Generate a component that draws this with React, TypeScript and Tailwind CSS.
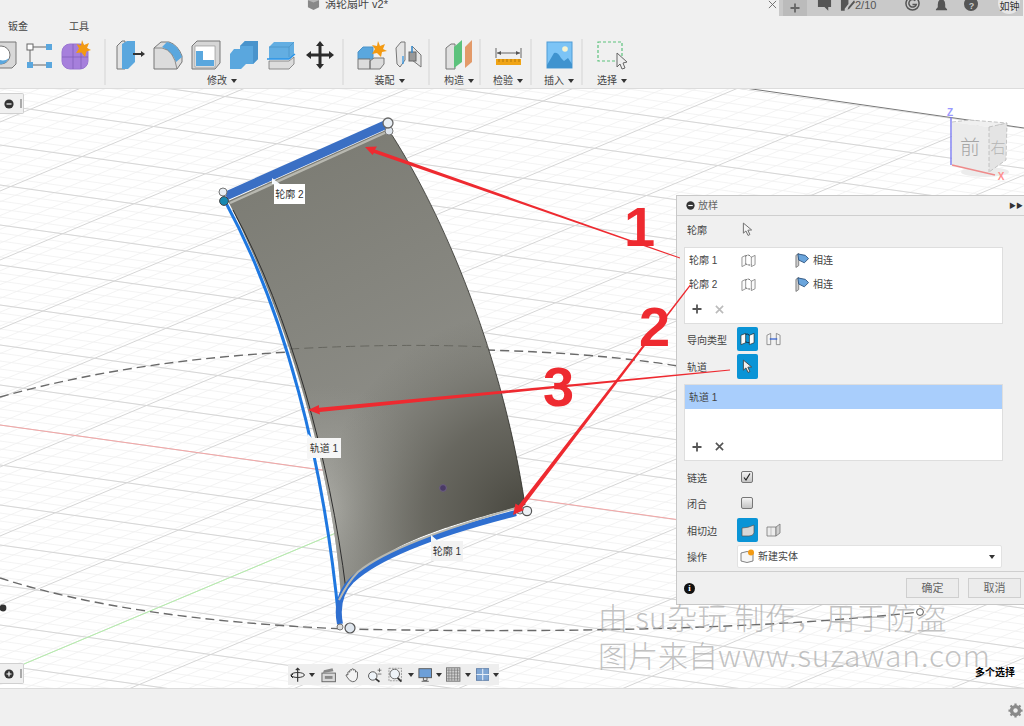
import type { ReactNode } from "react";

// ── Small helpers ──────────────────────────────────────────────────────────────

function Ico({ children, w = 30 }: { children: ReactNode; w?: number }) {
  return (
    <svg viewBox={`0 0 ${w} 30`} className="h-[30px] shrink-0" width={w}>
      {children}
    </svg>
  );
}

function Caret() {
  return <span className="ml-[4px] inline-block h-0 w-0 border-x-[3px] border-t-[4px] border-x-transparent border-t-[#333]" />;
}

function Sep() {
  return <div className="h-[46px] w-[2px] shrink-0 bg-[#e2e2e2]" />;
}

function Cursor({ fill = "#f4f4f4", stroke = "#666" }: { fill?: string; stroke?: string }) {
  return (
    <svg viewBox="0 0 12 16" className="h-[15px] w-[11px]">
      <path d="M1.5 1 L1.5 12 L4.3 9.6 L6.6 14.5 L8.6 13.5 L6.4 8.8 L10.5 8.5 Z" fill={fill} stroke={stroke} strokeWidth="1" />
    </svg>
  );
}

function ProfileIcon() {
  return (
    <svg viewBox="0 0 16 15" className="h-[15px] w-[15px]">
      <path d="M1 4 L5 2 V12 L1 14Z M11 4 L15 2 V12 L11 14Z" fill="#fafafa" stroke="#777" strokeWidth=".8" />
      <path d="M5 3 Q8 0 11 4 M5 11 Q8 13 11 12" fill="none" stroke="#444" strokeWidth="1" strokeDasharray="2 1" />
    </svg>
  );
}

function TangentIcon() {
  return (
    <svg viewBox="0 0 15 16" className="h-[16px] w-[14px]">
      <path d="M1 3 L4 1 V14 L1 16Z" fill="#ccc" stroke="#666" strokeWidth=".8" />
      <path d="M3 1.5 L11 3 L14.5 6.5 L10 11 L4 8Z" fill="#6aa5dc" stroke="#2f5580" strokeWidth="1" />
    </svg>
  );
}

function Plus({ x = "#555" }: { x?: string }) {
  return (
    <svg viewBox="0 0 10 10" className="h-[10px] w-[10px]">
      <path d="M5 0.5 V9.5 M0.5 5 H9.5" stroke={x} strokeWidth="1.8" />
    </svg>
  );
}

function Cross({ x = "#555" }: { x?: string }) {
  return (
    <svg viewBox="0 0 10 10" className="h-[9px] w-[9px]">
      <path d="M1 1 L9 9 M9 1 L1 9" stroke={x} strokeWidth="1.8" />
    </svg>
  );
}

function BlueBtn({ children }: { children: ReactNode }) {
  return <div className="flex h-full w-[21px] items-center justify-center rounded-[2px] bg-[#0a94d6]">{children}</div>;
}

function Row({ label, className, children }: { label: string; className: string; children?: ReactNode }) {
  return (
    <div className={`flex items-center ${className}`}>
      <span className="w-[53px] shrink-0 pl-[3px] pt-[3px]">{label}</span>
      {children}
    </div>
  );
}

function Checkbox({ checked }: { checked?: boolean }) {
  return (
    <div className="ml-[4px] flex h-[12px] w-[12px] items-center justify-center rounded-[2px] border border-[#777] bg-gradient-to-b from-[#f4f4f4] to-[#c4c4c4]">
      {checked && (
        <svg viewBox="0 0 10 10" className="h-[10px] w-[10px]">
          <path d="M2 5.5 L4 8 L8 1.5" fill="none" stroke="#222" strokeWidth="1.2" />
        </svg>
      )}
    </div>
  );
}

function ProfileRow({ label }: { label: string }) {
  return (
    <div className="flex h-[24px] items-center pl-[4px]">
      <span className="w-[52px] shrink-0 pt-[1px]">{label}</span>
      <div className="w-[54px] shrink-0"><ProfileIcon /></div>
      <TangentIcon />
      <span className="ml-[4px] pt-[1px]">相连</span>
    </div>
  );
}

function SideTab({ glyph }: { glyph: "minus" | "plus" }) {
  return (
    <div className="flex h-[21px] w-[24px] items-center rounded-r-[2px] border border-l-0 border-[#d0d0d0] bg-[#f0f0f0] pl-[4px]">
      <svg viewBox="0 0 10 10" className="h-[10px] w-[10px]">
        <circle cx="5" cy="5" r="4.6" fill="#333" />
        <path d={glyph === "minus" ? "M2.5 5 H7.5" : "M2.5 5 H7.5 M5 2.5 V7.5"} stroke="#fff" strokeWidth="1.2" />
      </svg>
      <span className="ml-[6px] h-[9px] w-[2px] bg-[#aaa]" />
    </div>
  );
}

// ── Ribbon ─────────────────────────────────────────────────────────────────────

function RibbonGroup({ label, className, labelClass = "", children }: { label?: string; className: string; labelClass?: string; children: ReactNode }) {
  return (
    <div className={`flex shrink-0 flex-col items-center ${className}`}>
      <div className="flex h-[32px] items-center gap-[8px]">{children}</div>
      {label && (
        <div className={`mt-[4px] flex h-[12px] items-center text-[10px] leading-none text-[#444] ${labelClass}`}>
          {label}
          <Caret />
        </div>
      )}
    </div>
  );
}

function Ribbon() {
  return (
    <div className="flex h-[52px] items-start pt-[2px]">
      {/* clipped first group */}
      <div className="-ml-[12px] flex h-[32px] w-[116px] shrink-0 items-center gap-[8px]">
        <Ico>
          <path d="M1 6 L5 2 H28 V24 L24 28 H1Z" fill="#d8d8d8" stroke="#777" />
          <circle cx="13" cy="15" r="9" fill="#fff" stroke="#777" />
          <path d="M6 16 Q14 24 21 18 Q16 27 9 23Z" fill="#5aa7de" />
        </Ico>
        <Ico w={27}>
          <rect x="1" y="4" width="6" height="6" fill="#fff" stroke="#666" />
          <rect x="20" y="4" width="6" height="6" fill="#5aa7de" />
          <rect x="1" y="22" width="6" height="6" fill="#5aa7de" />
          <rect x="20" y="22" width="6" height="6" fill="#5aa7de" />
          <path d="M7 7 H20 M4 10 V22 M7 25 H20" stroke="#666" />
        </Ico>
        <Ico>
          <rect x="1" y="4" width="26" height="25" rx="8" fill="#a67fdc" stroke="#9a76d2" />
          <path d="M1 17 H27 M12 4 V29 M20 4 V29" stroke="#7d5bb5" strokeWidth=".7" />
          <path d="M21 0 L23 5 L28 3 L26 8 L30 10 L25.5 11.5 L24 17 L20.5 12.5 L15 13 L18 8.5 L15.5 4 L20 5.5Z" fill="#f39a12" />
        </Ico>
      </div>
      <Sep />
      <RibbonGroup label="修改" labelClass="pr-[6px]" className="ml-[2px] w-[234px]">
        <Ico>
          <path d="M2 6 L7 1 H10 V29 H2Z" fill="#e2e2e2" stroke="#777" />
          <path d="M7 4 L12 1 H20 V22 L13 29 H7Z" fill="#5aa7de" />
          <path d="M18 14 H27" stroke="#333" strokeWidth="2" />
          <path d="M30 14 L26 11 V17Z" fill="#333" />
        </Ico>
        <Ico>
          <path d="M1 8 L8 2 H16 Q25 5 29 16 V22 L24 29 H1Z" fill="#dcdcdc" stroke="#777" />
          <path d="M14 2 Q25 4 29 17 L23 22 Q20 12 9 7Z" fill="#5aa7de" />
          <path d="M1 8 H9 Q21 10 24 29" fill="none" stroke="#777" strokeWidth=".8" />
        </Ico>
        <Ico>
          <path d="M1 6 L6 1 H29 V23 L24 29 H1Z" fill="#d6d6d6" stroke="#777" />
          <rect x="4" y="6" width="20" height="21" fill="#fff" stroke="#888" strokeWidth=".6" />
          <path d="M5 11 H12 V20 H23 V26 H5Z" fill="#5aa7de" />
        </Ico>
        <Ico>
          <path d="M1 14 L5 9 H11 V6 L16 1 H29 V19 L24 24 H17 V24 L12 29 H1Z" fill="#5aa7de" />
          <path d="M16 1 H29 V19 L24 24 V6 H11Z" fill="#4a94cc" />
        </Ico>
        <Ico>
          <path d="M2 7 L7 2 H27 V15 L23 19 H2Z" fill="#63aee2" />
          <path d="M22 7 H2 M22 7 L27 2 M22 7 V17" stroke="#4d94c8" strokeWidth=".8" fill="none" />
          <path d="M0 19 H22 L28 14" stroke="#2a94e8" strokeWidth="1.3" fill="none" />
          <path d="M2 21 H22 L27 17 V24 L22 29 H2Z" fill="#dcdcdc" stroke="#777" strokeWidth=".8" />
        </Ico>
        <Ico>
          <path d="M15 1 L19 6 H16.5 V13.5 H24 V11 L29 15 L24 19 V16.5 H16.5 V24 H19 L15 29 L11 24 H13.5 V16.5 H6 V19 L1 15 L6 11 V13.5 H13.5 V6 H11Z" fill="#2b2b2b" />
        </Ico>
      </RibbonGroup>
      <Sep />
      <RibbonGroup label="装配" className="ml-[7px] w-[77px]">
        <Ico>
          <path d="M1 12 L6 7 H16 V19 H1Z" fill="#5aa7de" stroke="#4d94c8" />
          <path d="M1 19 H13 V29 H1Z M13 21 L17 18 H27 V24 L23 29 H13Z" fill="#dcdcdc" stroke="#777" />
          <path d="M21 1 L23 6 L28 4 L26 9 L30 11 L25 12 L24 17 L20 13 L15 14 L18 9 L15 5 L20 6Z" fill="#f39a12" />
        </Ico>
        <Ico w={27}>
          <path d="M1 8 L6 2 H10 V20 L5 27 L2 24Z M17 6 L26 15 V27 L17 20Z" fill="#e4e4e4" stroke="#777" />
          <rect x="14" y="12" width="7" height="9" fill="#999" stroke="#666" />
          <path d="M17 6 V13 M8 16 V24" stroke="#2a94e8" strokeWidth="1.2" />
        </Ico>
      </RibbonGroup>
      <Sep />
      <RibbonGroup label="构造" className="ml-[9px] w-[40px]">
        <Ico w={28}>
          <path d="M1 8 L6 4 H10 V29 H1Z" fill="#e0e0e0" stroke="#777" />
          <path d="M9 7 L17 0 V22 L9 28Z" fill="#5cc27c" />
          <path d="M20 7 L27 0 V22 L20 28Z" fill="#e39a69" />
        </Ico>
      </RibbonGroup>
      <Sep />
      <RibbonGroup label="检验" className="ml-[5px] w-[44px]">
        <Ico w={27}>
          <path d="M1 8 V18 M26 8 V18 M2 13 H25" stroke="#666" strokeWidth="1" />
          <path d="M2 13 L6 11 V15Z M25 13 L21 11 V15Z" fill="#555" />
          <rect x="1" y="19" width="25" height="6" fill="#f0a416" />
          <path d="M4 19 V22 M8 19 V22 M12 19 V22 M16 19 V22 M20 19 V22 M24 19 V22" stroke="#8a5a00" strokeWidth=".6" />
        </Ico>
      </RibbonGroup>
      <Sep />
      <RibbonGroup label="插入" className="ml-[5px] w-[44px]">
        <Ico w={27}>
          <rect x="1" y="2" width="25" height="26" fill="#7cc4f6" stroke="#4f9cd6" />
          <circle cx="19" cy="9" r="2.8" fill="#f7f3d0" />
          <path d="M1 25 L8 13 Q12 12 15 18 L18 21 L22 18 L26 24 V28 H1Z" fill="#3f93cf" />
        </Ico>
      </RibbonGroup>
      <Sep />
      <RibbonGroup label="选择" className="ml-[6px] w-[46px]">
        <Ico>
          <rect x="1" y="2" width="24" height="19" fill="none" stroke="#5cc27c" strokeWidth="1.2" strokeDasharray="3 2" />
          <path d="M20 13 V27 L23 24 L25 29 L28 28 L26 23 L30 22Z" fill="#eee" stroke="#666" />
        </Ico>
      </RibbonGroup>
    </div>
  );
}

// ── Top bar ────────────────────────────────────────────────────────────────────

function TopRow() {
  return (
    <div className="flex h-[16px] items-start overflow-hidden">
      <svg viewBox="0 0 14 14" className="ml-[307px] h-[13px] w-[13px] shrink-0 -translate-y-[3px]">
        <path d="M7 1 L13 3.5 V11 L7 14 L1 11 V3.5Z" fill="#888" />
        <path d="M1 3.5 L7 6 L13 3.5 L7 1Z" fill="#b5b5b5" />
      </svg>
      <span className="ml-[5px] -translate-y-[3px] whitespace-nowrap text-[11px] leading-[14px] text-[#444]">涡轮扇叶 v2*</span>
      <svg viewBox="0 0 10 10" className="ml-[380px] h-[9px] w-[9px] shrink-0">
        <path d="M1 1 L9 9 M9 1 L1 9" stroke="#666" strokeWidth="1" />
      </svg>
      <div className="ml-[2px] flex h-[16px] w-[244px] shrink-0 items-center bg-[#c9c9c9] text-[#555]">
        <div className="ml-[4px] flex h-full w-[24px] items-center justify-center bg-[#bbbbbb]">
          <Plus x="#666" />
        </div>
        <svg viewBox="0 0 16 12" className="ml-[10px] h-[12px] w-[15px] -translate-y-[3px]">
          <path d="M1 0 H15 V8 H12 L12 12 L8 8 H1Z M3 3 H12 V4 H3Z" fill="#555" />
        </svg>
        <svg viewBox="0 0 16 12" className="ml-[8px] h-[12px] w-[15px] -translate-y-[3px]">
          <path d="M1 0 H9 V5 L5 10 V12 H1Z M9 8 L15 1 L16 3 L10 10 L8 11Z" fill="#555" />
        </svg>
        <span className="-translate-y-[3px] text-[11px] leading-none">2/10</span>
        <svg viewBox="0 0 16 16" className="ml-[29px] h-[15px] w-[15px] -translate-y-[5px]">
          <circle cx="8" cy="8" r="7" fill="none" stroke="#555" strokeWidth="1.6" />
          <path d="M11 5 A4 4 0 1 0 12 9 H8" fill="none" stroke="#555" strokeWidth="1.6" />
        </svg>
        <svg viewBox="0 0 14 14" className="ml-[15px] h-[13px] w-[13px] -translate-y-[3px]">
          <path d="M7 0 Q11 1 11 6 V9 L13 11 V12 H1 V11 L3 9 V6 Q3 1 7 0Z" fill="#555" />
        </svg>
        <div className="ml-[16px] flex h-[14px] w-[14px] -translate-y-[4px] items-end justify-center rounded-full bg-[#555] text-[9px] font-bold leading-none text-[#c9c9c9]">?</div>
        <div className="ml-[20px] flex h-[22px] w-[22px] shrink-0 translate-y-[-5px] items-end justify-center whitespace-nowrap rounded-full bg-[#e6e6e6] text-[10px] leading-[15px] text-[#333]">如钟</div>
      </div>
    </div>
  );
}

// ── Viewport drawing ───────────────────────────────────────────────────────────

const minorRed = Array.from({ length: 130 }, (_, i) => -15 + i * 8);
const minorGreen = Array.from({ length: 110 }, (_, i) => 50 + i * 13.8);
const majorRed = Array.from({ length: 26 }, (_, i) => -15 + i * 40);
const majorGreen = Array.from({ length: 22 }, (_, i) => 674 - 9 * 69 + i * 69);

const BLADE = "M228 201 L388 129 C435 200 500 340 525 505 C450 525 370 545 341 598 C334 470 284 310 228 201Z";

function Scene() {
  return (
    <svg viewBox="0 89 1024 599" className="absolute inset-0 h-full w-full">
      <defs>
        <clipPath id="ground">
          <path d="M0 -15 L1024 128.4 V700 H0Z" />
        </clipPath>
        <linearGradient id="bladeBase" gradientUnits="userSpaceOnUse" x1="300" y1="150" x2="420" y2="400">
          <stop offset="0" stopColor="#7c7c74" />
          <stop offset="1" stopColor="#8c8c86" />
        </linearGradient>
        <radialGradient id="bladeLight" gradientUnits="userSpaceOnUse" cx="325" cy="510" r="125">
          <stop offset="0" stopColor="#b0b0aa" stopOpacity=".95" />
          <stop offset="1" stopColor="#9a9a94" stopOpacity="0" />
        </radialGradient>
        <radialGradient id="bladeDark" gradientUnits="userSpaceOnUse" cx="530" cy="520" r="210">
          <stop offset="0" stopColor="#45443c" />
          <stop offset="0.5" stopColor="#5c5b53" stopOpacity=".75" />
          <stop offset="1" stopColor="#6a6a62" stopOpacity="0" />
        </radialGradient>
      </defs>
      <g clipPath="url(#ground)">
        {minorRed.map((y) => (
          <line key={y} x1="0" y1={y} x2="1024" y2={y + 143.4} stroke="#f0f0f0" strokeWidth=".8" />
        ))}
        {minorGreen.map((y) => (
          <line key={y} x1="0" y1={y} x2="1024" y2={y - 430} stroke="#f0f0f0" strokeWidth=".8" />
        ))}
        {majorRed.map((y) => (
          <line key={y} x1="0" y1={y} x2="1024" y2={y + 143.4} stroke="#d6d6d6" strokeWidth="1" />
        ))}
        {majorGreen.map((y) => (
          <line key={y} x1="0" y1={y} x2="1024" y2={y - 430} stroke="#d6d6d6" strokeWidth="1" />
        ))}
      </g>
      <line x1="745" y1="88" x2="1024" y2="128" stroke="#777" strokeWidth="1" />
      <line x1="0" y1="425" x2="1024" y2="568" stroke="#f4a6a6" strokeWidth="1" />
      <line x1="24" y1="664" x2="443" y2="488" stroke="#b4efaa" strokeWidth="1" />

      {/* dashed sweep circle */}
      <path d="M0 397 Q150 355 340 350 Q560 345 690 368" fill="none" stroke="#6a6a6a" strokeWidth="1.4" strokeDasharray="9 5" />
      <path d="M0 578 Q130 620 345 629 Q700 636 920 612" fill="none" stroke="#6a6a6a" strokeWidth="1.4" strokeDasharray="9 5" />
      <circle cx="3" cy="608" r="3.4" fill="#333" />
      <circle cx="920" cy="612" r="3.4" fill="#fff" stroke="#555" />

      {/* blade */}
      <path d={BLADE} fill="url(#bladeBase)" />
      <path d={BLADE} fill="url(#bladeLight)" />
      <path d={BLADE} fill="url(#bladeDark)" />
      <path d="M388 129 C435 200 500 340 525 505" fill="none" stroke="#2e2e2a" strokeWidth=".8" />
      <path d="M290 349 Q400 343 488 347" fill="none" stroke="#66665f" strokeWidth="1" strokeDasharray="9 5" />
      <path d="M233 210 C290 315 330 460 346 590" fill="none" stroke="#2e2e2e" strokeWidth="1" />
      <path d="M226 203 C284 310 324 460 339 622" fill="none" stroke="#1f78e0" strokeWidth="3" />
      <path d="M340 624 C336 604 342 590 352 580 C378 556 430 535 516 513" fill="none" stroke="#2f6fd0" strokeWidth="6" />
      <path d="M339 600 C344 590 350 580 358 572 C385 550 440 530 516 508" fill="none" stroke="#b8b8b0" strokeWidth="2" />
      <path d="M226 196 L387 124" fill="none" stroke="#3a6fc4" strokeWidth="9" />
      <path d="M230 203 L389 131" fill="none" stroke="#b8b8b0" strokeWidth="2.4" />
      <path d="M272 178 L280 184 L272 184Z M308 434 L314 440 L308 442Z M431 535 L438 541 L431 542Z" fill="#f4f8fc" />
      <circle cx="443" cy="488" r="3.4" fill="#4a3a66" stroke="#6d6080" />
      <circle cx="223" cy="192" r="4" fill="#e8eef4" stroke="#777" />
      <circle cx="224" cy="201" r="4.4" fill="#1688b0" stroke="#444" />
      <circle cx="389" cy="131" r="4" fill="#dfe6ee" stroke="#777" />
      <circle cx="388" cy="123" r="5" fill="#e8eef4" stroke="#666" strokeWidth="1.3" />
      <circle cx="520" cy="510" r="4" fill="#c5d6e8" stroke="#777" />
      <circle cx="527" cy="511" r="4.6" fill="#eef2f6" stroke="#555" strokeWidth="1.2" />
      <circle cx="340" cy="627" r="3" fill="#ddd" stroke="#777" />
      <circle cx="350" cy="628" r="5" fill="#dfe6ee" stroke="#555" strokeWidth="1.2" />

      {/* view cube */}
      <ellipse cx="985" cy="172" rx="24" ry="5" fill="#ececec" />
      <path d="M952 122 L970 120 L1007 123 L989 127Z" fill="#f0f0f0" />
      <path d="M952 122 L989 127 L989 172 L952 165Z" fill="#ebebeb" />
      <path d="M989 127 L1007 123 L1006 160 L989 172Z" fill="#e4e4e4" />
      <path d="M952 122 L970 120 L1007 123 L1006 160 L989 172 M989 127 L1007 123 M989 127 V172" fill="none" stroke="#b8b8b8" strokeWidth=".8" strokeDasharray="4 2" />
      <text x="970" y="155" textAnchor="middle" fontSize="20" fill="#a6a6a6" fontWeight="300">前</text>
      <text x="998" y="153" textAnchor="middle" fontSize="15" fill="#b4b4b4" fontWeight="300">右</text>
      <line x1="951" y1="117" x2="951" y2="165" stroke="#7a7af0" strokeWidth="1.4" />
      <line x1="952" y1="165" x2="995" y2="175" stroke="#ee8a8a" strokeWidth="1.4" />
      <text x="950" y="116" textAnchor="middle" fontSize="10" fontWeight="700" fill="#9a9aff">Z</text>
      <text x="1001" y="180" textAnchor="middle" fontSize="10" fontWeight="700" fill="#ff8f8f">X</text>
    </svg>
  );
}

function Annotations() {
  return (
    <svg viewBox="0 89 1024 599" className="pointer-events-none absolute inset-0 h-full w-full">
      <g fill="#ee2a30">
        <path d="M365 147 L377 146.5 L375 149.6 L680 257.5 L680 258.6 L374 153 L372.5 155Z" />
        <path d="M513 515 L515.5 503.5 L518.5 505.5 L690 284.6 L690.8 285.4 L522 508 L524 510Z" />
        <path d="M308 410 L319 405 L319 407.8 L730 369.4 L730 370.6 L319.5 412 L320 414.5Z" />
      </g>
    </svg>
  );
}

function CanvasLabel({ text, className }: { text: string; className: string }) {
  return <div className={`absolute flex h-[20px] items-center justify-center pt-[1px] text-[10px] text-[#333] ${className}`}>{text}</div>;
}

// ── Loft panel ─────────────────────────────────────────────────────────────────

function LoftPanel() {
  return (
    <div className="absolute left-[676px] top-[106px] flex h-[410px] w-[348px] flex-col border-y border-l border-[#c8c8c8] bg-[#f0f0f0] text-[10px] leading-none text-[#444]">
      <div className="flex h-[20px] shrink-0 items-center border-b border-[#cfcfcf] pl-[9px]">
        <svg viewBox="0 0 10 10" className="h-[9px] w-[9px]">
          <circle cx="5" cy="5" r="4.6" fill="#333" />
          <path d="M2.5 5 H7.5" stroke="#fff" strokeWidth="1.3" />
        </svg>
        <span className="ml-[3px] text-[#666]">放样</span>
        <span className="ml-auto mr-[1px] text-[7px] text-[#333]">▶▶</span>
      </div>
      <div className="flex flex-col px-[7px]">
        <Row label="轮廓" className="h-[26px]">
          <div className="ml-[5px] flex"><Cursor /></div>
        </Row>
        <div className="mt-[5px] flex h-[77px] w-[319px] flex-col border border-[#dedede] bg-white">
          <ProfileRow label="轮廓 1" />
          <ProfileRow label="轮廓 2" />
          <div className="flex h-[27px] items-center gap-[13px] pb-[1px] pl-[7px]">
            <Plus />
            <Cross x="#bbb" />
          </div>
        </div>
        <Row label="导向类型" className="mt-[3px] h-[24px]">
          <BlueBtn>
            <svg viewBox="0 0 16 14" className="h-[14px] w-[15px]">
              <path d="M1 3 L6 1 V11 L1 13Z M10 3 L15 1 V11 L10 13Z" fill="#fafafa" stroke="#222" strokeWidth=".7" />
              <path d="M6 2 Q8 1 10 3 M6 10 Q8 11 10 11" fill="none" stroke="#123" strokeWidth="1" />
            </svg>
          </BlueBtn>
          <div className="ml-[8px]">
            <svg viewBox="0 0 16 14" className="h-[14px] w-[15px]">
              <path d="M1 3 L5 1 V13 L1 13Z M11 1 L15 3 V13 L11 13Z" fill="#f4f4f4" stroke="#777" strokeWidth=".8" />
              <path d="M4 7 H12" stroke="#1c4fd0" strokeWidth="1.2" />
            </svg>
          </div>
        </Row>
        <Row label="轨道" className="mt-[3px] h-[25px]">
          <BlueBtn>
            <Cursor fill="#f0f0f0" stroke="#444" />
          </BlueBtn>
        </Row>
        <div className="mt-[5px] flex h-[77px] w-[319px] flex-col border border-[#dedede] bg-white">
          <div className="flex h-[24px] items-center bg-[#a9cefc] pl-[4px] pt-[1px]">轨道 1</div>
          <div className="mt-auto flex h-[27px] items-center gap-[13px] pl-[7px]">
            <Plus />
            <Cross />
          </div>
        </div>
        <Row label="链选" className="mt-[4px] h-[24px]"><Checkbox checked /></Row>
        <Row label="闭合" className="mt-[2px] h-[24px]"><Checkbox /></Row>
        <Row label="相切边" className="mt-[3px] h-[24px]">
          <BlueBtn>
            <svg viewBox="0 0 14 13" className="h-[13px] w-[14px]">
              <path d="M1 4 Q7 4 13 1 V9 Q12 12 8 12 H1Z" fill="#d8d8d8" stroke="#555" strokeWidth=".7" />
            </svg>
          </BlueBtn>
          <div className="ml-[8px]">
            <svg viewBox="0 0 15 14" className="h-[14px] w-[15px]">
              <path d="M1 4 H10 V13 H1Z" fill="#ececec" stroke="#777" strokeWidth=".8" />
              <path d="M10 4 L14 1 V10 L10 13Z" fill="#cfcfcf" stroke="#777" strokeWidth=".8" />
              <path d="M5 4 V13" stroke="#999" strokeWidth=".5" />
            </svg>
          </div>
        </Row>
        <Row label="操作" className="mt-[3px] h-[23px]">
          <div className="flex h-full w-[265px] items-center rounded-[2px] border border-[#e2e2e2] bg-white pl-[2px] pr-[6px]">
            <svg viewBox="0 0 15 15" className="h-[15px] w-[15px]">
              <path d="M1 4 Q7 1 13 4 V12 Q7 15 1 12Z" fill="#f6f6f6" stroke="#666" strokeWidth=".8" />
              <circle cx="11" cy="3.5" r="3" fill="#f39a12" />
            </svg>
            <span className="ml-[3px] pt-[1px]">新建实体</span>
            <span className="ml-auto h-0 w-0 border-x-[3px] border-t-[4px] border-x-transparent border-t-[#333]" />
          </div>
        </Row>
      </div>
      <div className="mt-[3px] flex flex-1 items-center border-t border-[#cfcfcf] pl-[7px] pr-[3px]">
        <div className="flex h-[11px] w-[11px] items-center justify-center rounded-full bg-[#111] font-['Liberation_Serif',serif] text-[9px] font-bold text-white">i</div>
        <div className="ml-auto flex h-[20px] w-[53px] items-center justify-center border border-[#cfcfcf] bg-[#ececec] text-[11px] text-[#666]">确定</div>
        <div className="ml-[9px] flex h-[20px] w-[53px] items-center justify-center border border-[#cfcfcf] bg-[#ececec] text-[11px] text-[#666]">取消</div>
      </div>
    </div>
  );
}

// ── Bottom nav toolbar ─────────────────────────────────────────────────────────

function NavBar() {
  return (
    <div className="absolute left-[288px] top-[575px] flex h-[21px] w-[211px] items-center bg-[#eeeeee] pl-[2px]">
      <svg viewBox="0 0 16 16" className="h-[16px] w-[16px]">
        <ellipse cx="8" cy="8" rx="7" ry="2.6" fill="none" stroke="#333" strokeWidth="1" />
        <path d="M8 1 V15 M6 3 L8 1 L10 3" fill="none" stroke="#333" strokeWidth="1.2" />
        <path d="M1 9 L3 11 M1 9 L3 7" stroke="#111" strokeWidth="1" />
      </svg>
      <Caret />
      <svg viewBox="0 0 16 16" className="ml-[6px] h-[16px] w-[16px]">
        <rect x="1" y="6" width="14" height="9" fill="#d8d8d8" stroke="#666" />
        <rect x="4" y="9" width="8" height="3" fill="#888" />
        <path d="M2 6 L3 3 L12 1 L13 4Z" fill="#888" />
      </svg>
      <svg viewBox="0 0 16 16" className="ml-[8px] h-[16px] w-[16px]">
        <path d="M3 8 V5 Q4 4 5 5 V3 Q6 2 7 3 V2 Q8 1 9 2 V3 Q10 2 11 3 V5 Q12 4 13 5 V10 Q12 15 8 15 Q5 15 2 10 L1 8 Q2 7 3 8Z" fill="#f4f4f4" stroke="#555" strokeWidth=".9" />
      </svg>
      <svg viewBox="0 0 16 16" className="ml-[7px] h-[16px] w-[16px]">
        <circle cx="6" cy="9" r="4.4" fill="#eef3f8" stroke="#555" />
        <path d="M9 12 L13 15" stroke="#333" strokeWidth="1.8" />
        <path d="M13 1 V5 M11 3 H15 M11 7 H15" stroke="#555" strokeWidth=".8" />
      </svg>
      <svg viewBox="0 0 16 16" className="ml-[6px] h-[16px] w-[16px]">
        <rect x="1" y="1" width="13" height="13" fill="none" stroke="#888" strokeDasharray="2 1" strokeWidth=".8" />
        <circle cx="7" cy="7" r="5" fill="#eef3f8" stroke="#666" />
        <path d="M10 11 L14 15" stroke="#333" strokeWidth="1.8" />
      </svg>
      <Caret />
      <svg viewBox="0 0 16 16" className="ml-[4px] h-[16px] w-[15px]">
        <rect x="1" y="1" width="14" height="10" fill="#6d9fd8" stroke="#555" />
        <path d="M6 11 V14 H10 V11 M4 15 H12" fill="none" stroke="#555" />
      </svg>
      <Caret />
      <svg viewBox="0 0 15 15" className="ml-[4px] h-[15px] w-[15px]">
        <rect x="0.5" y="0.5" width="14" height="14" fill="#cfcfcf" stroke="#777" />
        <path d="M3 1 V14 M6 1 V14 M9 1 V14 M12 1 V14 M1 3 H14 M1 6 H14 M1 9 H14 M1 12 H14" stroke="#777" strokeWidth=".7" />
      </svg>
      <Caret />
      <svg viewBox="0 0 15 15" className="ml-[5px] h-[15px] w-[14px]">
        <rect x="0.5" y="1" width="14" height="13" fill="#7fa6d4" stroke="#5f7ea8" />
        <path d="M7.5 1 V14 M0.5 7.5 H14.5" stroke="#e6eef8" strokeWidth="1.2" />
      </svg>
      <Caret />
    </div>
  );
}

export default function App() {
  return (
    <div className="flex h-[726px] w-[1024px] flex-col overflow-hidden bg-[#f0f0f0] font-['Liberation_Sans','Noto_Sans_CJK_SC',sans-serif]">
      {/* Header */}
      <header className="h-[89px] shrink-0 overflow-hidden border-b border-[#dcdcdc]">
        <TopRow />
        <div className="flex h-[21px] items-center text-[10px] text-[#444]">
          <span className="ml-[8px]">钣金</span>
          <span className="ml-[41px]">工具</span>
        </div>
        <Ribbon />
      </header>

      {/* Viewport */}
      <main className="relative h-[599px] shrink-0 overflow-hidden bg-white">
        <Scene />
        <div className="absolute left-0 top-[4px]"><SideTab glyph="minus" /></div>
        <div className="absolute bottom-[4px] left-0"><SideTab glyph="plus" /></div>
        <CanvasLabel text="轮廓 2" className="left-[274px] top-[95px] w-[31px] bg-white" />
        <CanvasLabel text="轨道 1" className="left-[307px] top-[349px] w-[34px] bg-[#f6f6f6]" />
        <CanvasLabel text="轮廓 1" className="left-[431px] top-[452px] w-[32px] bg-[#f2f2f2]" />
        <LoftPanel />
        <Annotations />
        <span className="absolute left-[624px] top-[106px] text-[56px] font-bold leading-[64px] text-[#ee2a30]">1</span>
        <span className="absolute left-[639px] top-[206px] text-[56px] font-bold leading-[64px] text-[#ee2a30]">2</span>
        <span className="absolute left-[543px] top-[266px] text-[56px] font-bold leading-[64px] text-[#ee2a30]">3</span>
        <NavBar />
        <div className="absolute left-[598px] top-[508px] whitespace-nowrap font-['Noto_Sans_CJK_SC',sans-serif] text-[30px] font-light leading-[38px] text-[#a8a8a8]/70">
          <p className="tracking-[0.3px]">由 su杂玩 制作，用于防盗</p>
          <p>图片来自<span className="tracking-[0.9px]">www.suzawan.com</span></p>
        </div>
        <span className="absolute left-[975px] top-[579px] text-[10px] font-bold leading-none text-black">多个选择</span>
      </main>

      {/* Status bar */}
      <footer className="flex h-[38px] shrink-0 items-center justify-end border-t border-[#dcdcdc] pr-[1px] pt-[5px]">
        <svg viewBox="0 0 16 16" className="h-[15px] w-[15px]">
          <circle cx="8" cy="8" r="4.5" fill="none" stroke="#8a8a8a" strokeWidth="3" />
          <path d="M8 0.5 V15.5 M0.5 8 H15.5 M2.7 2.7 L13.3 13.3 M13.3 2.7 L2.7 13.3" stroke="#8a8a8a" strokeWidth="2.4" />
          <circle cx="8" cy="8" r="2.4" fill="#f0f0f0" />
        </svg>
      </footer>
    </div>
  );
}
